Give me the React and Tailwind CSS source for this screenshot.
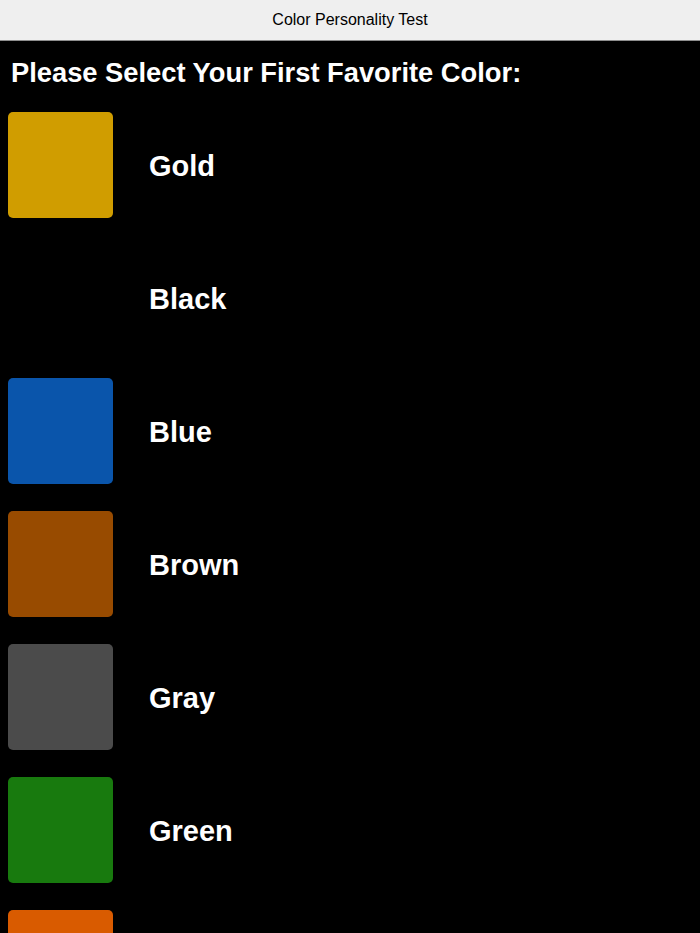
import React from "react";

const colors = [
  { name: "Gold", swatch: "bg-[#d09d00]" },
  { name: "Black", swatch: "bg-black" },
  { name: "Blue", swatch: "bg-[#0a55ab]" },
  { name: "Brown", swatch: "bg-[#984b00]" },
  { name: "Gray", swatch: "bg-[#4b4b4b]" },
  { name: "Green", swatch: "bg-[#187a0e]" },
  { name: "Orange", swatch: "bg-[#d95b00]" },
];

function App() {
  return (
    <div className="h-[933px] overflow-hidden bg-black font-['Liberation_Sans',Arial,sans-serif]">
      <div className="h-[41px] flex items-center justify-center bg-[#efefef] border-b border-[#8e8e8e]">
        <span className="text-[16px] text-black">Color Personality Test</span>
      </div>
      <h1 className="px-[11px] pt-[14px] text-[27.3px] leading-[36px] font-bold text-white">
        Please Select Your First Favorite Color:
      </h1>
      <div className="flex flex-col gap-[27px] pt-[21px]">
        {colors.map((c) => (
          <div key={c.name} className="flex items-center">
            <div className={`ml-[8px] w-[105px] h-[106px] rounded-[5px] ${c.swatch}`}></div>
            <span className="ml-[36px] pt-[4px] text-[29px] font-bold text-white">{c.name}</span>
          </div>
        ))}
      </div>
    </div>
  );
}

export default App;
